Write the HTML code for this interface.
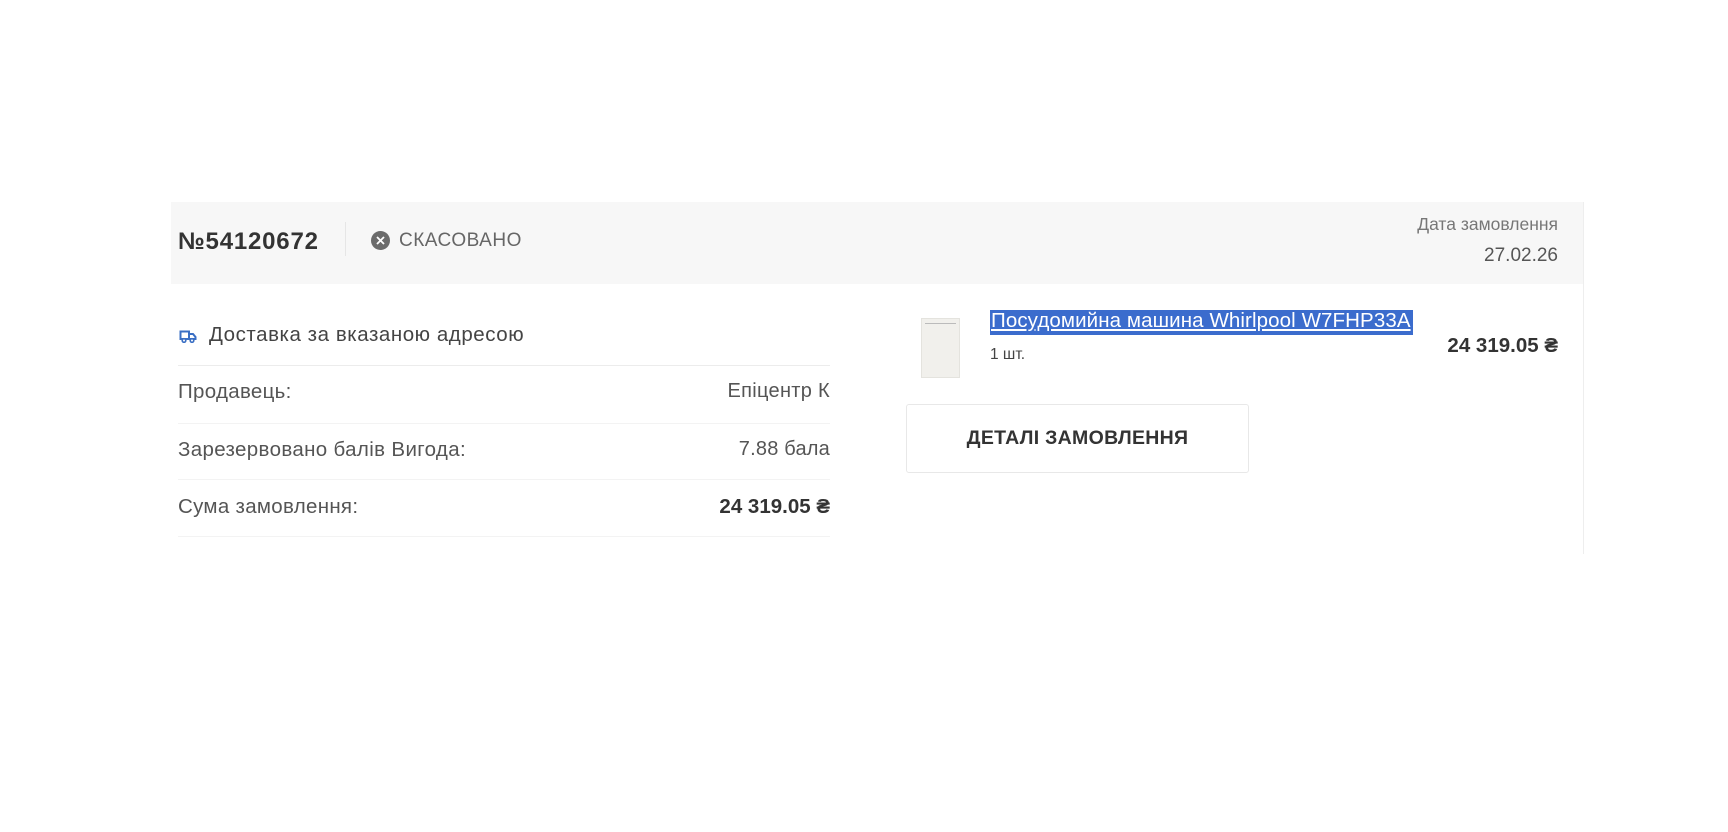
<!DOCTYPE html>
<html><head><meta charset="utf-8"><style>
*{margin:0;padding:0;box-sizing:border-box}
body{width:1728px;height:832px;background:#fff;font-family:"Liberation Sans",sans-serif;color:#333;position:relative;overflow:hidden}
.a{position:absolute;white-space:nowrap}
</style></head><body>
<div class="a" style="left:171px;top:202px;width:1413px;height:82px;background:#f7f7f7"></div>
<div class="a" style="left:1583px;top:202px;width:1px;height:352px;background:#eee"></div>
<div class="a" style="left:178px;top:228px;font-size:24px;font-weight:bold;color:#333;letter-spacing:0.8px">№54120672</div>
<div class="a" style="left:345px;top:222px;width:1px;height:34px;background:#e6e6e6"></div>
<svg class="a" style="left:371px;top:231px" width="19" height="19" viewBox="0 0 19 19"><circle cx="9.5" cy="9.5" r="9.5" fill="#6b6b6b"/><path d="M6 6L13 13M13 6L6 13" stroke="#fff" stroke-width="1.8"/></svg>
<div class="a" style="left:399px;top:230px;font-size:19px;color:#666;letter-spacing:0.5px">СКАСОВАНО</div>
<div class="a" style="right:170px;top:214px;font-size:17.5px;color:#777">Дата замовлення</div>
<div class="a" style="right:170px;top:245px;font-size:19px;color:#555">27.02.26</div>

<svg class="a" style="left:179px;top:330px" width="18" height="13" viewBox="0 0 18 13"><path d="M1.5 1.5H10V9H1.5Z M10 4H14L16.5 7V9H10" fill="none" stroke="#3a6fc4" stroke-width="2"/><circle cx="5" cy="10.5" r="1.8" fill="#fff" stroke="#3a6fc4" stroke-width="1.6"/><circle cx="13" cy="10.5" r="1.8" fill="#fff" stroke="#3a6fc4" stroke-width="1.6"/></svg>
<div class="a" style="left:209px;top:323px;font-size:20.5px;color:#444;letter-spacing:0.55px">Доставка за вказаною адресою</div>
<div class="a" style="left:178px;top:365px;width:652px;height:1px;background:#ececec"></div>
<div class="a" style="left:178px;top:380px;font-size:20.5px;color:#555;letter-spacing:0.3px">Продавець:</div>
<div class="a" style="right:898px;top:380px;font-size:20px;color:#555;letter-spacing:0.3px">Епіцентр К</div>
<div class="a" style="left:178px;top:423px;width:652px;height:1px;background:#f3f3f3"></div>
<div class="a" style="left:178px;top:438px;font-size:20.5px;color:#555;letter-spacing:0.35px">Зарезервовано балів Вигода:</div>
<div class="a" style="right:898px;top:438px;font-size:20px;color:#555;letter-spacing:0.2px">7.88 бала</div>
<div class="a" style="left:178px;top:479px;width:652px;height:1px;background:#f3f3f3"></div>
<div class="a" style="left:178px;top:495px;font-size:20.5px;color:#555;letter-spacing:0.3px">Сума замовлення:</div>
<div class="a" style="right:898px;top:495px;font-size:20.5px;font-weight:bold;color:#333">24 319.05 ₴</div>
<div class="a" style="left:178px;top:536px;width:652px;height:1px;background:#f3f3f3"></div>

<div class="a" style="left:921px;top:318px;width:39px;height:60px;background:#f1f0ec;border:1px solid #e4e3de"><div style="margin:4px 3px;height:1px;background:#bbb"></div></div>
<div class="a" style="left:990px;top:310px;height:25px;width:423px;background:#3b6ccd"></div>
<div class="a" style="left:991px;top:309px;font-size:20.5px;color:#fff;text-decoration:underline;letter-spacing:0.1px">Посудомийна машина Whirlpool W7FHP33A</div>
<div class="a" style="left:990px;top:346px;font-size:15.5px;color:#444">1 шт.</div>
<div class="a" style="right:170px;top:334px;font-size:20.5px;font-weight:bold;color:#333">24 319.05 ₴</div>
<div class="a" style="left:906px;top:404px;width:343px;height:69px;border:1px solid #e8e8e8;border-radius:3px;background:#fff;font-size:19.5px;font-weight:bold;color:#333;text-align:center;line-height:67px;letter-spacing:0.3px">ДЕТАЛІ ЗАМОВЛЕННЯ</div>
</body></html>
